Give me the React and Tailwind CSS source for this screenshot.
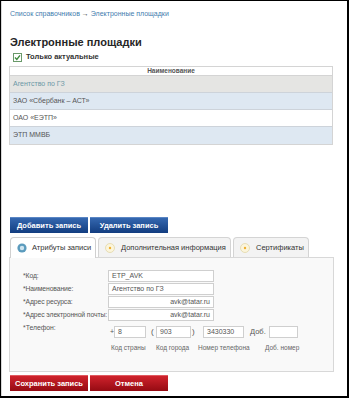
import React from "react";

const font = { fontFamily: '"Liberation Sans", Arial, sans-serif' };

function Check() {
  return (
    <div className="w-[9px] h-[9px] border border-[#6a9a6a] bg-white flex items-center justify-center">
      <svg width="7" height="7" viewBox="0 0 7 7">
        <path d="M1 3.6 L2.8 5.4 L6 1.4" fill="none" stroke="#3c8a3c" strokeWidth="1.4" />
      </svg>
    </div>
  );
}

function TabIcon({ active }) {
  if (active) {
    return (
      <svg width="10" height="10" viewBox="0 0 10 10" className="shrink-0">
        <circle cx="5" cy="5" r="4.6" fill="#5b9bbd" />
        <circle cx="5" cy="5" r="2.2" fill="#cfe4ef" />
      </svg>
    );
  }
  return (
    <svg width="10" height="10" viewBox="0 0 10 10" className="shrink-0">
      <circle cx="5" cy="5" r="4.5" fill="#fbf5dc" stroke="#e2d7a8" strokeWidth="0.8" />
      <circle cx="5" cy="5" r="1.2" fill="#f0b030" />
    </svg>
  );
}

function BlueBtn({ children, w }) {
  return (
    <div
      className={`${w} h-[16px] flex items-center justify-center text-white font-bold text-[7.5px] bg-gradient-to-b from-[#3568b0] to-[#123d80] border-t border-[#5a86c4]`}
    >
      {children}
    </div>
  );
}

function RedBtn({ children, w }) {
  return (
    <div
      className={`${w} h-[16px] flex items-center justify-center text-white font-bold text-[7.5px] bg-gradient-to-b from-[#d0222c] to-[#950a12] border-t border-[#e05a60]`}
    >
      {children}
    </div>
  );
}

function Input({ value, right, w = "w-[106px]", h = "h-[12px]" }) {
  return (
    <div
      className={`${w} ${h} shrink-0 bg-white border border-[#cfcfcf] flex items-center px-[3px] text-[7px] text-[#555] ${right ? "justify-end" : ""}`}
    >
      {value}
    </div>
  );
}

export default function App() {
  const rows = [
    { t: "Агентство по ГЗ", bg: "bg-[#e5e5e3]", c: "text-[#6b98a6]" },
    { t: "ЗАО «Сбербанк – АСТ»", bg: "bg-[#dee8f2]", c: "text-[#555]" },
    { t: "ОАО «ЕЭТП»", bg: "bg-white", c: "text-[#555]" },
    { t: "ЭТП ММВБ", bg: "bg-[#dee8f2]", c: "text-[#555]" },
  ];
  return (
    <div
      style={font}
      className="w-[349px] h-[398px] overflow-hidden bg-white border-t border-l border-r-2 border-b-2 border-black"
    >
      <div className="h-full border-l border-[#d8d8d8] pl-[7px] pt-[8px]">
        <div className="text-[7px] leading-[9px] text-[#3f7cae] pl-[1px]">
          Список справочников <span className="text-[#333]">→</span> Электронные площадки
        </div>
        <div className="mt-[17px] text-[11px] leading-[14px] font-bold text-[#262626] pl-[1px]">
          Электронные площадки
        </div>
        <div className="mt-[3px] h-[10px] flex items-center pl-[4px] gap-[4px]">
          <Check />
          <span className="text-[7.5px] text-[#333] font-bold">Только актуальные</span>
        </div>
        <div className="mt-[4px] w-[324px] border border-[#d4d4d4]">
          <div className="h-[9px] bg-white flex items-center justify-center text-[6.5px] font-bold text-[#555] border-b border-[#d4d4d4]">
            Наименование
          </div>
          {rows.map((r, i) => (
            <div
              key={i}
              className={`h-[17px] flex items-center pl-[3px] text-[7px] ${r.bg} ${r.c} ${i < 3 ? "border-b border-[#cdd3da]" : ""}`}
            >
              {r.t}
            </div>
          ))}
        </div>

        <div className="mt-[72px] flex gap-[2px] pl-[1px]">
          <BlueBtn w="w-[78px]">Добавить запись</BlueBtn>
          <BlueBtn w="w-[78px]">Удалить запись</BlueBtn>
        </div>

        <div className="mt-[3px] flex gap-[2px] pl-[1px] h-[21px] items-end">
          <div className="w-[86px] h-[21px] bg-white border border-b-0 border-[#d0d0d0] rounded-t-[4px] flex items-center gap-[5px] pl-[6px] text-[7.5px] text-[#333] relative z-10 -mb-px pb-px">
            <TabIcon active />
            Атрибуты записи
          </div>
          <div className="w-[133px] h-[20px] bg-[#f3f3f3] border border-b-0 border-[#d4d4d4] rounded-t-[4px] flex items-center gap-[6px] pl-[6px] text-[7.5px] text-[#333]">
            <TabIcon />
            Дополнительная информация
          </div>
          <div className="w-[76px] h-[20px] bg-[#f3f3f3] border border-b-0 border-[#d4d4d4] rounded-t-[4px] flex items-center gap-[6px] pl-[6px] text-[7.5px] text-[#333]">
            <TabIcon />
            Сертификаты
          </div>
        </div>

        <div className="w-[325px] h-[115px] bg-[#f9f9f9] border border-[#d8d8d8] pt-[12px] pl-[13px] text-[7px] text-[#555]">
          <div className="flex flex-col gap-[1px]">
            {[
              ["*Код:", "ETP_AVK", false],
              ["*Наименование:", "Агентство по ГЗ", false],
              ["*Адрес ресурса:", "avk@tatar.ru", true],
              ["*Адрес электронной почты:", "avk@tatar.ru", true],
            ].map(([l, v, r], i) => (
              <div key={i} className="flex items-center h-[12px]">
                <div className="w-[85px] shrink-0 whitespace-nowrap text-[6.8px] tracking-[-0.1px]">{l}</div>
                <Input value={v} right={r} />
              </div>
            ))}
          </div>
          <div className="flex mt-[2px]">
            <div className="w-[85px] shrink-0 leading-[9px] text-[6.8px]">*Телефон:</div>
            <div className="flex flex-col mt-[3px]">
              <div className="flex items-center h-[12px]">
                <span className="w-[6px] pl-[2px]">+</span>
                <Input value="8" w="w-[32px]" />
                <span className="w-[10px] pl-[5px] text-[8px]">(</span>
                <Input value="903" w="w-[35px]" />
                <span className="w-[12px] pl-[1px] text-[8px]">)</span>
                <Input value="3430330" w="w-[41px]" />
                <span className="w-[25px] pl-[6px] text-[7.5px]">Доб.</span>
                <Input value="" w="w-[29px]" />
              </div>
              <div className="flex mt-[5px] text-[6.5px] text-[#666] whitespace-nowrap">
                <span className="w-[48px] pl-[3px]">Код страны</span>
                <span className="w-[42px]">Код города</span>
                <span className="w-[67px]">Номер телефона</span>
                <span>Доб. номер</span>
              </div>
            </div>
          </div>
        </div>

        <div className="mt-[3px] flex gap-[2px] pl-[1px]">
          <RedBtn w="w-[78px]">Сохранить запись</RedBtn>
          <RedBtn w="w-[78px]">Отмена</RedBtn>
        </div>
      </div>
    </div>
  );
}
